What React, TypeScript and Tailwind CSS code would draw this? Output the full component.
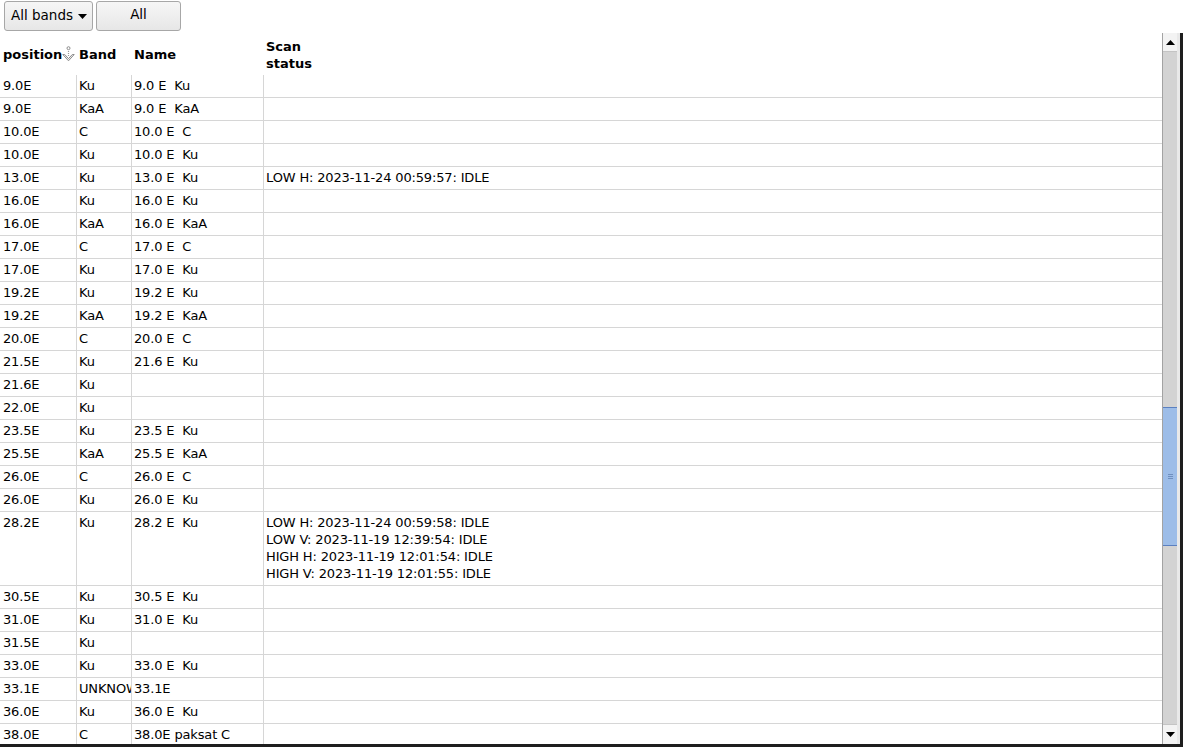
import React from "react";

type Row = { pos: string; band: string; name: string; status?: string[] };

const rows: Row[] = [
  { pos: "9.0E", band: "Ku", name: "9.0 E  Ku" },
  { pos: "9.0E", band: "KaA", name: "9.0 E  KaA" },
  { pos: "10.0E", band: "C", name: "10.0 E  C" },
  { pos: "10.0E", band: "Ku", name: "10.0 E  Ku" },
  { pos: "13.0E", band: "Ku", name: "13.0 E  Ku", status: ["LOW H: 2023-11-24 00:59:57: IDLE"] },
  { pos: "16.0E", band: "Ku", name: "16.0 E  Ku" },
  { pos: "16.0E", band: "KaA", name: "16.0 E  KaA" },
  { pos: "17.0E", band: "C", name: "17.0 E  C" },
  { pos: "17.0E", band: "Ku", name: "17.0 E  Ku" },
  { pos: "19.2E", band: "Ku", name: "19.2 E  Ku" },
  { pos: "19.2E", band: "KaA", name: "19.2 E  KaA" },
  { pos: "20.0E", band: "C", name: "20.0 E  C" },
  { pos: "21.5E", band: "Ku", name: "21.6 E  Ku" },
  { pos: "21.6E", band: "Ku", name: "" },
  { pos: "22.0E", band: "Ku", name: "" },
  { pos: "23.5E", band: "Ku", name: "23.5 E  Ku" },
  { pos: "25.5E", band: "KaA", name: "25.5 E  KaA" },
  { pos: "26.0E", band: "C", name: "26.0 E  C" },
  { pos: "26.0E", band: "Ku", name: "26.0 E  Ku" },
  {
    pos: "28.2E",
    band: "Ku",
    name: "28.2 E  Ku",
    status: [
      "LOW H: 2023-11-24 00:59:58: IDLE",
      "LOW V: 2023-11-19 12:39:54: IDLE",
      "HIGH H: 2023-11-19 12:01:54: IDLE",
      "HIGH V: 2023-11-19 12:01:55: IDLE",
    ],
  },
  { pos: "30.5E", band: "Ku", name: "30.5 E  Ku" },
  { pos: "31.0E", band: "Ku", name: "31.0 E  Ku" },
  { pos: "31.5E", band: "Ku", name: "" },
  { pos: "33.0E", band: "Ku", name: "33.0 E  Ku" },
  { pos: "33.1E", band: "UNKNOWN", name: "33.1E" },
  { pos: "36.0E", band: "Ku", name: "36.0 E  Ku" },
  { pos: "38.0E", band: "C", name: "38.0E paksat C" },
];

function SortIcon() {
  return (
    <svg width="13" height="17" viewBox="0 0 13 17" className="shrink-0">
      <circle cx="6.5" cy="2.2" r="1.5" fill="none" stroke="#8c8c8c" strokeWidth="1" />
      <line x1="6.5" y1="5" x2="6.5" y2="10.5" stroke="#999" strokeWidth="1.2" strokeDasharray="1 1" />
      <path d="M0.8 8.5 L6.5 14.8 L12.2 8.5 L10.3 8.5 L6.5 12.6 L2.7 8.5 Z" fill="#f0f0f0" stroke="#8c8c8c" strokeWidth="1" />
    </svg>
  );
}

export default function App() {
  return (
    <div
      className="w-[1183px] h-[747px] bg-white text-black overflow-hidden flex flex-col text-[13px]"
      style={{ fontFamily: '"DejaVu Sans", "Liberation Sans", sans-serif' }}
    >
      {/* toolbar */}
      <div className="h-[33px] shrink-0 flex items-start gap-[3px] pl-[4px] pt-[1px]">
        <button className="h-[30px] w-[89px] flex items-center justify-start pl-[6px] gap-[5px] rounded-[3px] border border-[#a7a7a7] bg-gradient-to-b from-[#f6f6f6] to-[#e7e7e7] text-[13.5px] leading-none">
          <span>All bands</span>
          <svg width="9" height="5" viewBox="0 0 9 5">
            <path d="M0 0 L9 0 L4.5 5 Z" fill="#000" />
          </svg>
        </button>
        <button className="h-[30px] w-[85px] flex items-center justify-center rounded-[3px] border border-[#a7a7a7] bg-gradient-to-b from-[#f6f6f6] to-[#e7e7e7] text-[13.5px] leading-none pb-[3px]">
          All
        </button>
      </div>

      {/* main area */}
      <div className="flex-1 min-h-0 flex border-b-[3px] border-b-[#1e1e1e]">
        <div className="flex-1 min-w-0 overflow-hidden">
          {/* header */}
          <div className="grid grid-cols-[77px_55px_132px_1fr] h-[42px] font-bold leading-[17px]">
            <div className="flex items-center pl-[3px] gap-0">
              <span>position</span>
              <SortIcon />
            </div>
            <div className="flex items-center pl-[2px]">Band</div>
            <div className="flex items-center pl-[2px]">Name</div>
            <div className="flex items-center pl-[2px] pt-[1px]">
              <span>
                Scan
                <br />
                status
              </span>
            </div>
          </div>
          {/* rows */}
          {rows.map((r, i) => (
            <div
              key={i}
              className="grid grid-cols-[77px_55px_132px_1fr] border-b border-[#d6d6d6] leading-[17px] tracking-[-0.15px]"
            >
              <div className="border-r border-[#d6d6d6] pl-[3px] pt-[2px] pb-[3px] whitespace-nowrap overflow-hidden">
                {r.pos}
              </div>
              <div className="border-r border-[#d6d6d6] pl-[2px] pt-[2px] pb-[3px] whitespace-nowrap overflow-hidden">
                {r.band}
              </div>
              <div className="border-r border-[#d6d6d6] pl-[2px] pt-[2px] pb-[3px] whitespace-pre overflow-hidden">
                {r.name}
              </div>
              <div className="pl-[2px] pt-[2px] pb-[3px] whitespace-nowrap">
                {r.status ? r.status.map((s, j) => <div key={j}>{s}</div>) : <span>&nbsp;</span>}
              </div>
            </div>
          ))}
        </div>

        {/* scrollbar */}
        <div className="w-[15px] shrink-0 flex flex-col bg-[#d3d3d3] border-l border-[#a3a3a3]">
          <div className="h-[19px] shrink-0 bg-[#f3f3f3] border-b border-[#c4c4c4] flex items-center justify-center">
            <svg width="9" height="5" viewBox="0 0 9 5">
              <path d="M0 5 L9 5 L4.5 0 Z" fill="#000" />
            </svg>
          </div>
          <div className="flex-1 flex flex-col">
            <div className="h-[355px] shrink-0" />
            <div className="h-[139px] shrink-0 bg-[#9dbde8] border-y border-[#5b80c0] flex flex-col items-center justify-center gap-[1px]">
              <div className="w-[5px] h-[1px] bg-[#6f8fbf]" />
              <div className="w-[5px] h-[1px] bg-[#6f8fbf]" />
              <div className="w-[5px] h-[1px] bg-[#6f8fbf]" />
            </div>
            <div className="flex-1" />
          </div>
          <div className="h-[20px] shrink-0 bg-[#f3f3f3] border-t border-[#c4c4c4] flex items-center justify-center">
            <svg width="9" height="5" viewBox="0 0 9 5">
              <path d="M0 0 L9 0 L4.5 5 Z" fill="#000" />
            </svg>
          </div>
        </div>
        <div className="w-[3px] shrink-0 bg-[#e9e9e9]" />
        <div className="w-[3px] shrink-0 bg-[#1e1e1e]" />
      </div>
    </div>
  );
}
